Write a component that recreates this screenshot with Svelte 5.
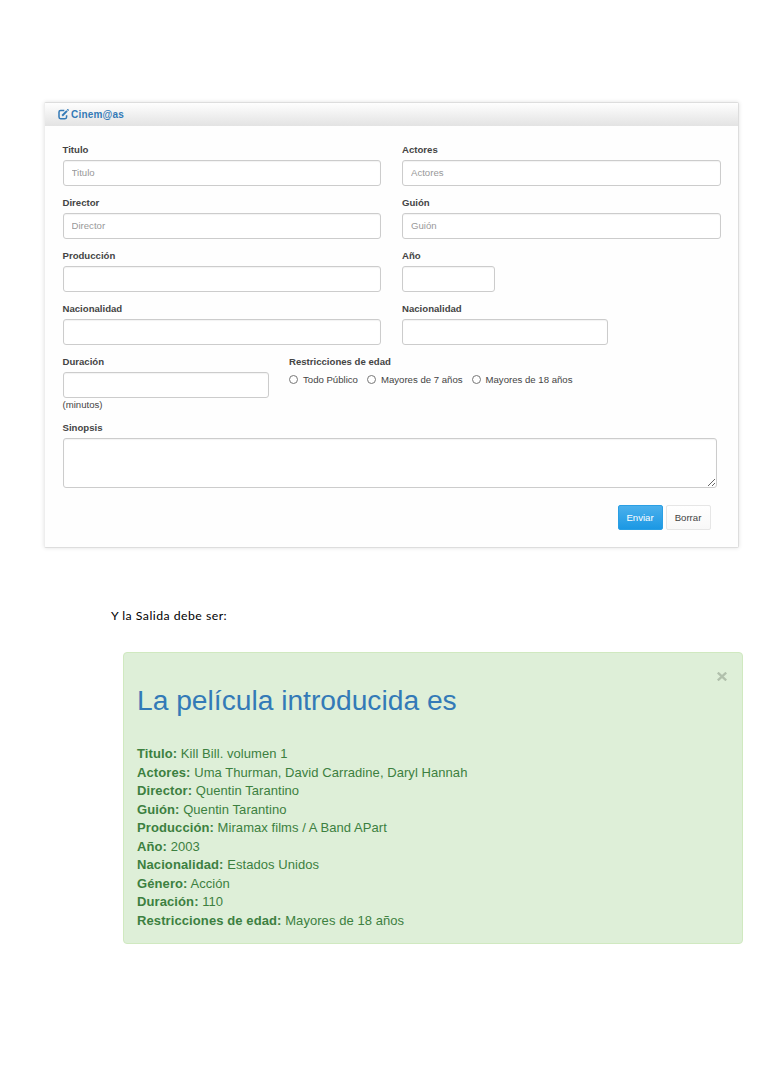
<script>
  const rows = [
    [{ label: 'Titulo', hint: 'Titulo', w: 318.5 }, { label: 'Actores', hint: 'Actores', w: 319 }],
    [{ label: 'Director', hint: 'Director', w: 318.5 }, { label: 'Guión', hint: 'Guión', w: 319 }],
    [{ label: 'Producción', hint: '', w: 318.5 }, { label: 'Año', hint: '', w: 92.5 }],
    [{ label: 'Nacionalidad', hint: '', w: 318.5 }, { label: 'Nacionalidad', hint: '', w: 206 }]
  ];
  const ages = ['Todo Público', 'Mayores de 7 años', 'Mayores de 18 años'];
  const film = [
    ['Titulo', 'Kill Bill. volumen 1'],
    ['Actores', 'Uma Thurman, David Carradine, Daryl Hannah'],
    ['Director', 'Quentin Tarantino'],
    ['Guión', 'Quentin Tarantino'],
    ['Producción', 'Miramax films / A Band APart'],
    ['Año', '2003'],
    ['Nacionalidad', 'Estados Unidos'],
    ['Género', 'Acción'],
    ['Duración', '110'],
    ['Restricciones de edad', 'Mayores de 18 años']
  ];
</script>

<main>
  <section class="panel">
    <header>
      <svg width="11" height="11" viewBox="0 0 11 11" fill="none" stroke="#337ab7">
        <path d="M6.3 1.5H2.6Q1 1.5 1 3.1V8Q1 9.7 2.6 9.7H7Q8.6 9.7 8.6 8V6.3" stroke-width="1.5" />
        <path d="M4.2 6.7L9 1.9" stroke-width="2" />
        <path d="M9.3 .3L10.6 1.6" stroke-width="1.4" />
      </svg>
      <span>Cinem@as</span>
    </header>
    <form onsubmit={(e) => e.preventDefault()}>
      <div class="grid">
        {#each rows as row}
          {#each row as f}
            <label class="field">
              <b>{f.label}</b>
              <input type="text" placeholder={f.hint} style="width: {f.w}px" />
            </label>
          {/each}
        {/each}
      </div>
      <div class="extra">
        <label class="field duration">
          <b>Duración</b>
          <input type="text" />
          <small>(minutos)</small>
        </label>
        <div class="field">
          <b>Restricciones de edad</b>
          <div class="radios">
            {#each ages as age}
              <label><input type="radio" name="edad" /><span>{age}</span></label>
            {/each}
          </div>
        </div>
      </div>
      <label class="field synopsis">
        <b>Sinopsis</b>
        <textarea></textarea>
      </label>
      <div class="actions">
        <button class="send">Enviar</button>
        <button class="clear" type="reset">Borrar</button>
      </div>
    </form>
  </section>

  <p class="note">Y la Salida debe ser:</p>

  <section class="alert">
    <div class="top">
      <h1>La película introducida es</h1>
      <svg class="close" width="10" height="9" viewBox="0 0 10 9" stroke="#b1c0ac" stroke-width="2.3">
        <path d="M.8 .6L9.2 8.4M9.2 .6L.8 8.4" />
      </svg>
    </div>
    <ul>
      {#each film as [name, value]}
        <li><b>{name}:</b> {value}</li>
      {/each}
    </ul>
  </section>
</main>

<style>
  :global(body) { background: #fff; }
  * { box-sizing: border-box; }
  main {
    height: 1088px;
    padding: 102px 34px 0 44px;
    font-family: "Liberation Sans", Arial, sans-serif;
    font-size: 9.6px;
    color: #444;
    overflow: hidden;
  }
  .panel {
    width: 694.5px;
    height: 446px;
    border: 1px solid #ddd;
    border-left-color: #eee;
    border-radius: 2px;
    box-shadow: 0 0 4px rgba(0, 0, 0, 0.12);
    background: #fefefe;
  }
  header {
    height: 23px;
    padding: 0 0 0 13px;
    display: flex;
    align-items: center;
    gap: 2px;
    background: linear-gradient(#fefefe, #e3e3e3);
    color: #337ab7;
    font-weight: bold;
    font-size: 10px;
    letter-spacing: 0.2px;
  }
  header span { line-height: 12px; padding-top: 1px; }
  form { padding: 18px 17px 0 17.5px; }
  .grid {
    display: grid;
    grid-template-columns: 319px 319px;
    column-gap: 20.5px;
  }
  .field {
    display: flex;
    flex-direction: column;
    align-items: flex-start;
  }
  .grid .field { height: 53px; }
  .field > b { height: 16px; line-height: 12px; font-size: 9.6px; white-space: nowrap; }
  input[type="text"], textarea {
    display: block;
    height: 26px;
    padding: 0 8px 1px;
    border: 1px solid #ccc;
    border-radius: 3px;
    background: #fff;
    box-shadow: inset 0 1px 1px rgba(0, 0, 0, 0.05);
    font: inherit;
    color: #555;
    outline: none;
  }
  input::placeholder { color: #999; opacity: 1; }
  .extra {
    display: flex;
    height: 66px;
    gap: 20.5px;
  }
  .duration input { width: 206px; }
  small { font-size: 9.6px; line-height: 14px; }
  .radios { display: flex; gap: 9px; padding-top: 2px; }
  .radios label { display: flex; align-items: center; height: 12px; white-space: nowrap; }
  .radios span { line-height: 11px; padding-bottom: 1px; }
  .radios input {
    appearance: none;
    width: 9px;
    height: 9px;
    margin: 0 5px 1px 0;
    border: 1px solid #777;
    border-radius: 50%;
    background: #fff;
  }
  .synopsis textarea { width: 654.5px; height: 50px; resize: both; }
  .actions {
    display: flex;
    justify-content: flex-end;
    gap: 3px;
    padding: 17px 10px 0 0;
  }
  button {
    height: 25px;
    width: 45px;
    padding: 0;
    font: inherit;
    border-radius: 2px;
  }
  .send {
    border: 1px solid #2a9fe4;
    background: linear-gradient(#4bb0ec, #1b98e4);
    color: #fff;
  }
  .clear {
    border: 1px solid #e6e6e6;
    background: linear-gradient(#fff, #f8f8f8);
    color: #444;
  }
  .note {
    margin: 60px 0 0 67px;
    font: 12.3px/16px Lato, sans-serif;
    letter-spacing: 0.46px;
    color: #000;
  }
  .alert {
    width: 620px;
    height: 292px;
    margin: 28px 0 0 79px;
    padding: 19px 15px 0 13px;
    border: 1px solid #d0e9c0;
    border-radius: 4px;
    background: #deefd8;
    color: #3c8040;
  }
  .top { display: flex; justify-content: space-between; height: 73px; }
  h1 {
    margin: 11px 0 0;
    font-size: 28.2px;
    line-height: 34px;
    font-weight: normal;
    color: #337ab7;
    white-space: nowrap;
  }
  ul { margin: 0; padding: 0; list-style: none; font-size: 13px; letter-spacing: 0.06px; }
  li { height: 18.55px; line-height: 18.55px; white-space: nowrap; }
  li b { letter-spacing: 0.1px; }
</style>
